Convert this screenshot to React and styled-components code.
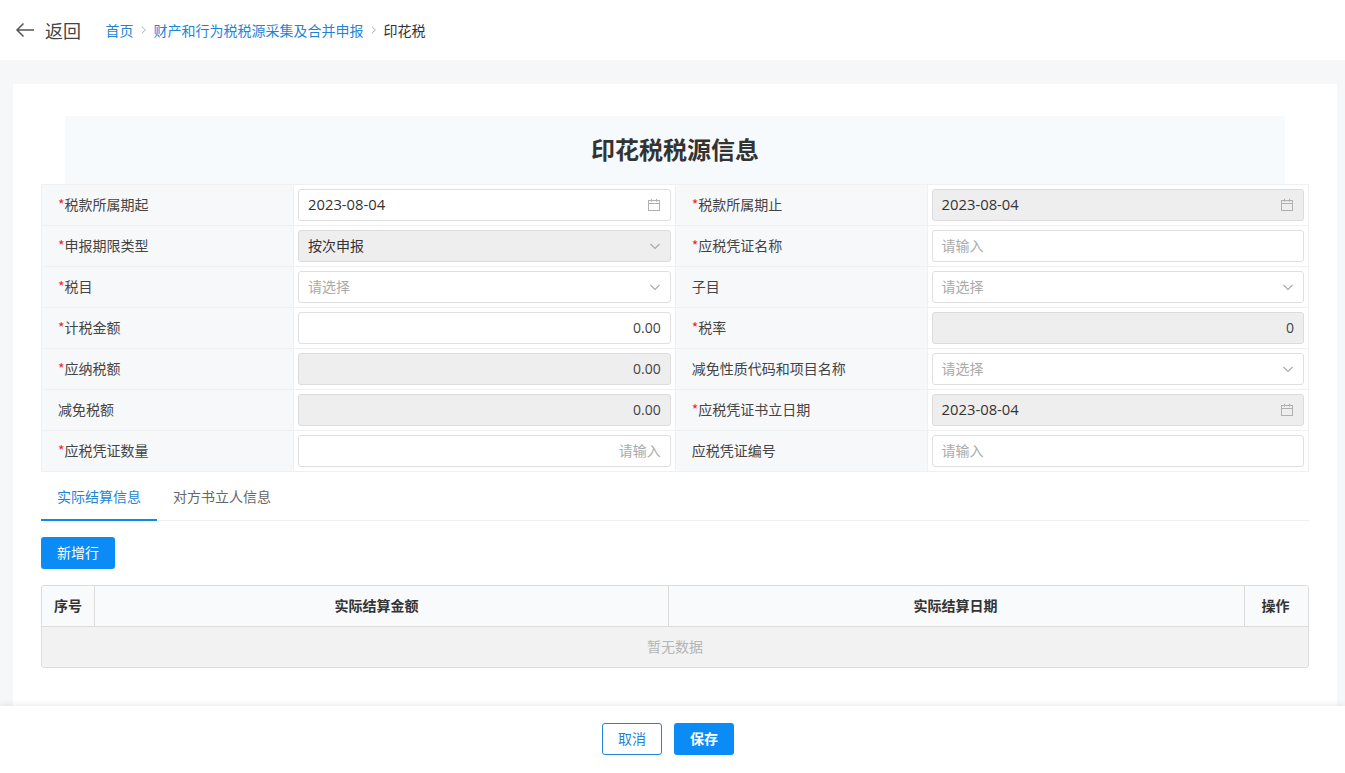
import React from "react";
import styled, { createGlobalStyle } from "styled-components";

const Global = createGlobalStyle`
  html, body { margin: 0; padding: 0; height: 100%; overflow: hidden; }
  body { font-family: "Noto Sans CJK SC", "Open Sans", sans-serif; color: #333; font-size: 14px; }
  * { box-sizing: border-box; }
`;
const Page = styled.div`display:flex;flex-direction:column;height:773px;background:#f5f7f9;overflow:hidden;`;
const Header = styled.header`height:60px;background:#fff;display:flex;align-items:center;padding-left:15px;flex:none;`;
const Back = styled.div`display:flex;align-items:center;gap:10px;font-size:18px;color:#444;width:90.5px;`;
const Crumbs = styled.nav`display:flex;align-items:center;font-size:14px;`;
const Crumb = styled.span`color:${p => p.$current ? "#333" : "#1f84d6"};`;
const Sep = styled.span`width:20px;display:flex;justify-content:center;color:#aaa;`;
const Main = styled.main`flex:1;min-height:0;padding:24px 8px 0 13px;overflow:hidden;`;
const Card = styled.section`background:#fff;height:100%;padding:32px 28px 0;`;
const Title = styled.h1`margin:0 24px;height:68px;background:#f7fafc;display:flex;align-items:center;justify-content:center;font-size:24px;font-weight:700;color:#333;padding-bottom:3px;`;
const FormGrid = styled.div`display:grid;grid-template-columns:252px 381.7px 251.9px 1fr;grid-auto-rows:41px;border-top:1px solid #eef0f2;border-left:1px solid #eef0f2;`;
const Label = styled.div`background:#f7f8fa;display:flex;align-items:center;padding:0 0 2px 16px;font-size:14px;color:#444;border-right:1px solid #eef0f2;border-bottom:1px solid #eef0f2;`;
const Star = styled.span`color:#f5222d;`;
const Cell = styled.div`padding:4px;border-right:1px solid #eef0f2;border-bottom:1px solid #eef0f2;`;
const Control = styled.div`height:32px;border:1px solid ${p => p.$disabled ? "#dcdcdc" : "#dfdfdf"};border-radius:3px;background:${p => p.$disabled ? "#eeeeee" : "#fff"};display:flex;align-items:center;justify-content:${p => p.$right ? "flex-end" : "space-between"};padding:0 9px 3px;font-size:14px;color:${p => p.$placeholder ? "#aaa" : "#333"};& > svg{position:relative;top:1px;}`;
const DateText = styled.span`font-family:"Open Sans","Noto Sans",sans-serif;font-size:14.8px;color:#333;`;
const Num = styled.span`font-family:"Open Sans","Noto Sans",sans-serif;font-size:14px;color:#444;position:relative;top:1px;`;
const Tabs = styled.div`display:flex;height:49px;border-bottom:1px solid #eef0f2;`;
const Tab = styled.div`width:${p => p.$w}px;display:flex;align-items:center;justify-content:center;font-size:14px;color:${p => p.$active ? "#1f84d6" : "#666"};border-bottom:${p => p.$active ? "2px solid #0b8af0" : "none"};height:${p => p.$active ? "49px" : "48px"};`;
const PrimaryBtn = styled.button`height:32px;width:${p => p.$w}px;border:0;border-radius:3px;background:#0a8bf5;color:#fff;font:inherit;font-size:14px;font-weight:${p => p.$bold ? 700 : 400};padding:0 0 2px;`;
const Toolbar = styled.div`padding:16px 0;display:flex;`;
const Table = styled.div`border:1px solid #dcdcdc;border-radius:3px;width:1268px;overflow:hidden;`;
const HeadRow = styled.div`display:grid;grid-template-columns:53px 574px 576px 1fr;height:41px;background:#f9fafc;border-bottom:1px solid #dcdcdc;`;
const Th = styled.div`display:flex;align-items:center;justify-content:center;font-size:14px;font-weight:700;color:#333;padding:0 ${p => p.$pr || 0}px 2px 0;border-right:${p => p.$last ? "none" : "1px solid #dcdcdc"};`;
const Empty = styled.div`height:40px;background:#f2f2f2;display:flex;align-items:center;justify-content:center;color:#b5b5b5;font-size:14px;padding-bottom:3px;`;
const Footer = styled.footer`height:67px;flex:none;background:#fff;box-shadow:0 -2px 6px rgba(0,0,0,.07);display:flex;align-items:center;justify-content:center;gap:12px;position:relative;padding:0 9px 1px 0;`;
const GhostBtn = styled.button`height:32px;width:60px;border:1px solid #1f84d6;border-radius:3px;background:#fff;color:#1f84d6;font:inherit;font-size:14px;padding:0 0 2px;`;

const Calendar = () => (
  <svg width="14" height="14" viewBox="0 0 14 14" fill="none" stroke="#b0b0b0" strokeWidth="1">
    <rect x="1.5" y="2.5" width="11" height="10" />
    <path d="M1.5 5.5h11M4.5 .8v3M9.5 .8v3" />
  </svg>
);
const Chevron = () => (
  <svg width="12" height="12" viewBox="0 0 12 12" fill="none" stroke="#a8a8a8" strokeWidth="1.1">
    <path d="M1.5 4l4.5 4.5L10.5 4" />
  </svg>
);
const Arrow = () => (
  <svg width="20" height="16" viewBox="0 0 20 16" fill="none" stroke="#555" strokeWidth="1.5">
    <path d="M19 8H2M8.5 1.5L2 8l6.5 6.5" />
  </svg>
);
const Small = () => (
  <svg width="6" height="8" viewBox="0 0 6 8" fill="none" stroke="#b0b0b0" strokeWidth="1"><path d="M1 .8L4.4 4 1 7.2" /></svg>
);

const Field = ({ label, req, children }) => (
  <>
    <Label>{req && <Star>*</Star>}{label}</Label>
    <Cell>{children}</Cell>
  </>
);
const DateInput = ({ disabled }) => (
  <Control $disabled={disabled}><DateText>2023-08-04</DateText><Calendar /></Control>
);
const SelectInput = ({ value }) => (
  <Control $placeholder={!value} $disabled={!!value}><span>{value || "请选择"}</span><Chevron /></Control>
);
const TextInput = () => <Control $placeholder>请输入</Control>;
const NumInput = ({ disabled, value }) => <Control $right $disabled={disabled}><Num>{value}</Num></Control>;

export default function App() {
  return (
    <Page>
      <Global />
      <Header>
        <Back><Arrow /><span>返回</span></Back>
        <Crumbs>
          <Crumb>首页</Crumb><Sep><Small /></Sep>
          <Crumb>财产和行为税税源采集及合并申报</Crumb><Sep><Small /></Sep>
          <Crumb $current>印花税</Crumb>
        </Crumbs>
      </Header>
      <Main>
        <Card>
          <Title>印花税税源信息</Title>
          <FormGrid>
            <Field label="税款所属期起" req><DateInput /></Field>
            <Field label="税款所属期止" req><DateInput disabled /></Field>
            <Field label="申报期限类型" req><SelectInput value="按次申报" /></Field>
            <Field label="应税凭证名称" req><TextInput /></Field>
            <Field label="税目" req><SelectInput /></Field>
            <Field label="子目"><SelectInput /></Field>
            <Field label="计税金额" req><NumInput value="0.00" /></Field>
            <Field label="税率" req><NumInput disabled value="0" /></Field>
            <Field label="应纳税额" req><NumInput disabled value="0.00" /></Field>
            <Field label="减免性质代码和项目名称"><SelectInput /></Field>
            <Field label="减免税额"><NumInput disabled value="0.00" /></Field>
            <Field label="应税凭证书立日期" req><DateInput disabled /></Field>
            <Field label="应税凭证数量" req><Control $right $placeholder>请输入</Control></Field>
            <Field label="应税凭证编号"><TextInput /></Field>
          </FormGrid>
          <Tabs>
            <Tab $active $w={116}>实际结算信息</Tab>
            <Tab $w={130}>对方书立人信息</Tab>
          </Tabs>
          <Toolbar><PrimaryBtn $w={74}>新增行</PrimaryBtn></Toolbar>
          <Table>
            <HeadRow>
              <Th>序号</Th><Th $pr={10}>实际结算金额</Th><Th $pr={2}>实际结算日期</Th><Th $last $pr={2}>操作</Th>
            </HeadRow>
            <Empty>暂无数据</Empty>
          </Table>
        </Card>
      </Main>
      <Footer>
        <GhostBtn>取消</GhostBtn>
        <PrimaryBtn $w={60} $bold>保存</PrimaryBtn>
      </Footer>
    </Page>
  );
}
